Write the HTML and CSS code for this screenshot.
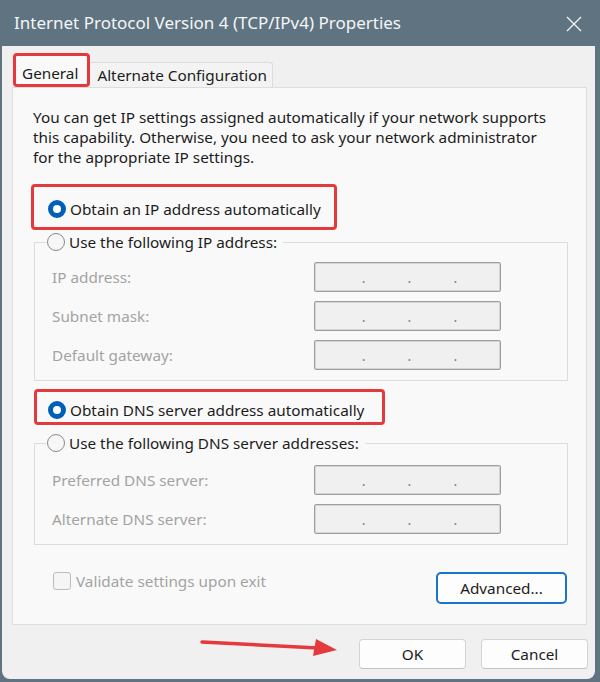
FILE: index.html
```html
<!DOCTYPE html>
<html lang="en">
<head>
  <meta charset="UTF-8">
  <meta name="viewport" content="width=device-width, initial-scale=1.0">
  <title>Internet Protocol Version 4 (TCP/IPv4) Properties</title>
  <link rel="stylesheet" href="styles.css">
</head>
<body>
  <div class="window">
    <div class="titlebar">
      <span class="title">Internet Protocol Version 4 (TCP/IPv4) Properties</span>
      <svg class="close" width="16" height="16" viewBox="0 0 16 16">
        <path d="M1 1 L15 15 M15 1 L1 15" stroke="#f2f4f6" stroke-width="1.3" fill="none"/>
      </svg>
    </div>

    <div class="dialog">
      <div class="tabs">
        <div class="tab tab-active">General</div>
        <div class="tab">Alternate Configuration</div>
      </div>

      <div class="panel">
        <p class="intro">You can get IP settings assigned automatically if your network supports this capability. Otherwise, you need to ask your network administrator for the appropriate IP settings.</p>

        <div class="mark mark-ip">
          <label class="radio"><span class="dot dot-on"></span>Obtain an IP address automatically</label>
        </div>

        <fieldset class="group group-ip">
          <legend><label class="radio"><span class="dot"></span>Use the following IP address:</label></legend>
          <div class="field"><span class="field-label">IP address:</span><span class="ipbox"><i>.</i><i>.</i><i>.</i></span></div>
          <div class="field"><span class="field-label">Subnet mask:</span><span class="ipbox"><i>.</i><i>.</i><i>.</i></span></div>
          <div class="field"><span class="field-label">Default gateway:</span><span class="ipbox"><i>.</i><i>.</i><i>.</i></span></div>
        </fieldset>

        <div class="mark mark-dns">
          <label class="radio"><span class="dot dot-on"></span>Obtain DNS server address automatically</label>
        </div>

        <fieldset class="group group-dns">
          <legend><label class="radio"><span class="dot"></span>Use the following DNS server addresses:</label></legend>
          <div class="field"><span class="field-label">Preferred DNS server:</span><span class="ipbox"><i>.</i><i>.</i><i>.</i></span></div>
          <div class="field"><span class="field-label">Alternate DNS server:</span><span class="ipbox"><i>.</i><i>.</i><i>.</i></span></div>
        </fieldset>

        <div class="bottom-row">
          <label class="check"><span class="box"></span>Validate settings upon exit</label>
          <button class="btn btn-advanced">Advanced...</button>
        </div>
      </div>

      <div class="footer">
        <svg class="arrow" width="170" height="24" viewBox="0 0 170 24">
          <path d="M2 5 L118 11" stroke="#e53a3d" stroke-width="3.5" stroke-linecap="round"/>
          <polygon points="116,2 113,19 137,13" fill="#e53a3d"/>
        </svg>
        <button class="btn">OK</button>
        <button class="btn">Cancel</button>
      </div>
    </div>
  </div>
</body>
</html>
```

FILE: styles.css
```css
* {
  box-sizing: border-box;
}
body {
  margin: 0;
  width: 600px;
  height: 682px;
  background-color: #5f7480;
  font-family: "Noto Sans", "Open Sans", sans-serif;
  font-size: 15.3px;
  line-height: 20px;
  color: #1c1c1c;
  overflow: hidden;
}
.window {
  height: 682px;
  display: flex;
  flex-direction: column;
}
.titlebar {
  height: 46px;
  display: flex;
  align-items: center;
  justify-content: space-between;
  padding: 0 18px 0 14px;
}
.title {
  color: #f4f6f8;
  font-size: 17px;
}
.close {
  display: block;
  margin-top: 1px;
}
.dialog {
  flex: 1;
  margin: 0 5px 3px 2px;
  padding: 7px 8px 10px 10px;
  background-color: #f0f0f0;
  border-radius: 0 0 8px 8px;
}
.tabs {
  display: flex;
  align-items: flex-end;
  height: 34px;
  margin-left: 1px;
}
.tab {
  height: 25px;
  padding: 2px 5px 3px 7px;
  background-color: #f3f3f3;
  border-top: 1px solid #dcdcdc;
  border-right: 1px solid #dcdcdc;
  border-radius: 0 3px 0 0;
}
.tab-active {
  height: 34px;
  padding: 7px 9px 1px 6px;
  background-color: #f9f9f9;
  border: 3px solid #e53a3d;
  border-radius: 4px;
}
.panel {
  background-color: #f9f9f9;
  border: 1px solid #dedede;
  padding: 19px 18px 20px 20px;
}
.intro {
  margin: 0;
  max-width: 522px;
}
.mark {
  width: fit-content;
  border: 3px solid #e53a3d;
  border-radius: 4px;
}
.mark-ip {
  margin: 17px 0 0 -2px;
  padding: 12px 13px 8px 14px;
}
.mark-dns {
  margin: 8px 0 0 1px;
  padding: 8px 18px 2px 11px;
}
.radio {
  display: flex;
  align-items: center;
  gap: 4px;
}
.dot {
  width: 18px;
  height: 18px;
  border-radius: 50%;
  border: 1px solid #8a8a8a;
  background-color: #f7f7f7;
}
.dot-on {
  border: 5px solid #005fb8;
  background-color: #ffffff;
}
.group {
  margin: 2px 0 0 1px;
  border: 1px solid #dcdcdc;
  padding: 10px 0 10px 17px;
  display: flex;
  flex-direction: column;
  gap: 9px;
}
.group-dns {
  margin-top: 8px;
  padding-top: 12px;
}
.group legend {
  margin-left: -6px;
  padding: 0 6px 0 1px;
}
.field {
  display: flex;
  align-items: center;
  height: 30px;
}
.field-label {
  width: 262px;
  color: #a3a3a3;
}
.ipbox {
  width: 187px;
  height: 30px;
  display: flex;
  justify-content: center;
  align-items: flex-end;
  gap: 42px;
  padding: 0 0 6px 4px;
  background-color: #f0f0f0;
  border: 1px solid #9e9e9e;
  border-radius: 2px;
  box-shadow: inset 0 0 0 1px #d6d6d6;
}
.ipbox i {
  font-style: normal;
  font-size: 14px;
  line-height: 14px;
  color: #7c7c8c;
}
.bottom-row {
  display: flex;
  justify-content: space-between;
  align-items: flex-start;
  margin: 27px 1px 0 0;
  padding-left: 20px;
}
.check {
  display: flex;
  align-items: center;
  gap: 5px;
  line-height: 18px;
  color: #a3a3a3;
}
.box {
  width: 18px;
  height: 18px;
  border: 1px solid #bcbcbc;
  border-radius: 3px;
  background-color: #f5f5f5;
}
.btn {
  width: 107px;
  height: 30px;
  font-family: inherit;
  font-size: 15.3px;
  color: #1c1c1c;
  background-color: #fdfdfd;
  border: 1px solid #d4d4d4;
  border-bottom-color: #c2c2c2;
  border-radius: 4px;
  padding: 0;
}
.btn-advanced {
  width: 131px;
  height: 32px;
  border: 2px solid #1a74c8;
  border-radius: 5px;
}
.footer {
  position: relative;
  display: flex;
  justify-content: flex-end;
  gap: 15px;
  padding-top: 14px;
  margin-right: -1px;
}
.arrow {
  position: absolute;
  left: 188px;
  top: 12px;
}
```
